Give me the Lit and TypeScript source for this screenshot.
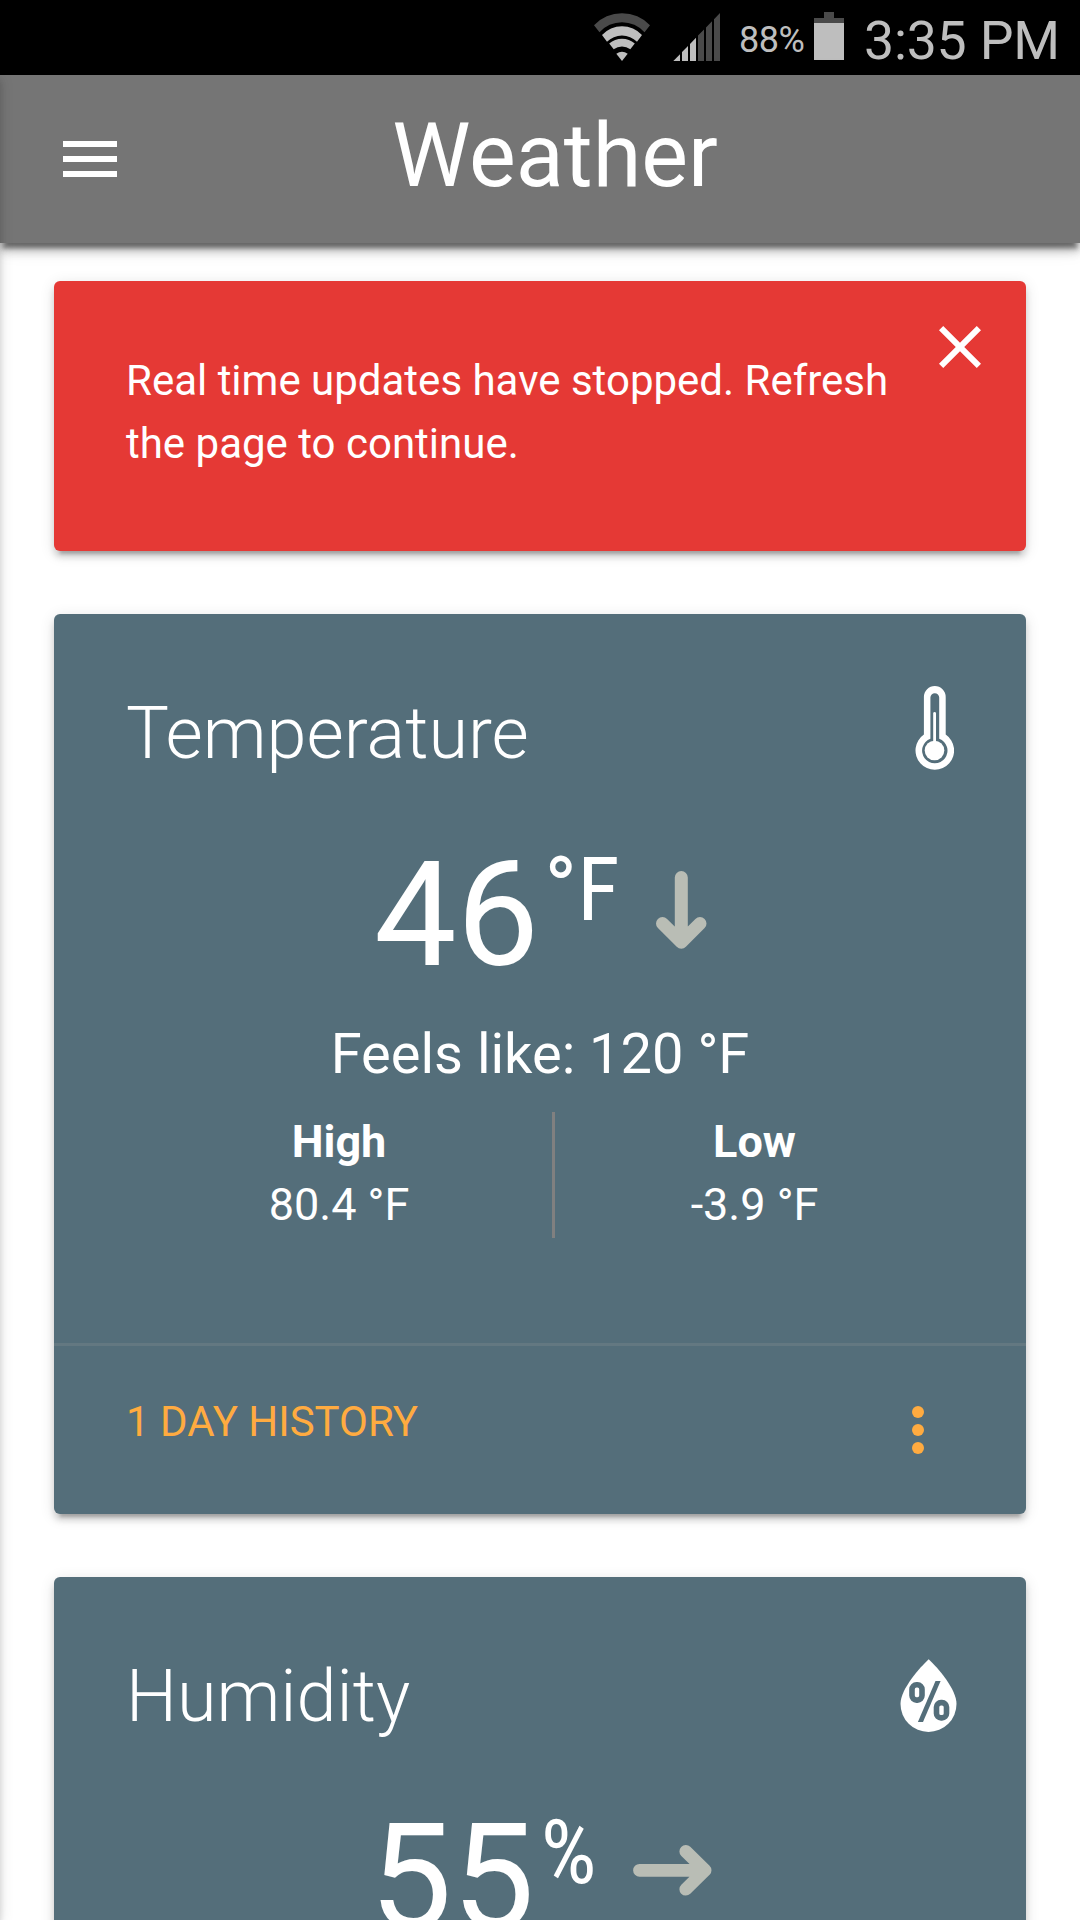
import { LitElement, html, css } from "lit";
import { customElement, property } from "lit/decorators.js";

type Trend = "down" | "right";

@customElement("status-bar")
class StatusBar extends LitElement {
  static styles = css`
    :host {
      display: flex;
      justify-content: flex-end;
      align-items: flex-start;
      height: 75px;
      background: #000;
      color: #bebebe;
      box-sizing: border-box;
      padding-right: 22px;
    }
    .icons { flex: none; width: 145px; height: 75px; }
    .level { font-size: 36px; line-height: 42px; letter-spacing: -0.5px; padding-top: 19px; width: 75px; }
    .battery { flex: none; width: 30px; height: 75px; }
    .clock { font-size: 53.6px; line-height: 64px; font-weight: 400; letter-spacing: -0.2px; padding: 8.5px 0 0 20px; box-sizing: border-box; width: 214px; white-space: nowrap; }
  `;
  render() {
    return html`
      <svg class="icons" viewBox="594 0 145 75">
        <path fill="#4a4a4a" d="M594 25.3A38.5 38.5 0 0 1 650 25.3L644.5 32.3A30 30 0 0 0 599.5 32.3Z" />
        <path fill="#bebebe" d="M602 35A27 27 0 0 1 642 35L637 41.8A21 21 0 0 0 607 41.8Z" />
        <path fill="#bebebe" d="M609.2 43.5A19.5 19.5 0 0 1 634.8 43.5L630.3 49.3A14 14 0 0 0 613.7 49.3Z" />
        <path fill="#bebebe" d="M616.3 53.8A9.5 9.5 0 0 1 627.7 53.8L622 61Z" />
        <path fill="#bebebe" d="M673.3 61L680 54.2V61ZM682 61V52.1L688 46V61ZM690 61V43.9L696 37.7V61Z" />
        <path fill="#4a4a4a" d="M698 61V35.6L704 29.4V61ZM706 61V27.4L712 21.2V61ZM714 61V19.2L720 13V61Z" />
      </svg>
      <span class="level">88%</span>
      <svg class="battery" viewBox="0 0 30 75">
        <path fill="#4a4a4a" d="M10 12H20V18H30V23H0V18H10Z" />
        <rect y="23" width="30" height="37" fill="#bebebe" />
      </svg>
      <span class="clock">3:35 PM</span>
    `;
  }
}

@customElement("weather-card")
class WeatherCard extends LitElement {
  @property() heading = "";
  @property() value = "";
  @property() unit = "";
  @property() trend: Trend = "right";
  @property() icon = "";
  @property() feels = "";
  @property() high = "";
  @property() low = "";
  @property() history = "";

  static styles = css`
    :host {
      display: flex;
      flex-direction: column;
      box-sizing: border-box;
      flex: none;
      height: 900px;
      border-radius: 6px;
      background: #546e7a;
      color: #fff;
      box-shadow: 0 6px 6px 0 rgba(0, 0, 0, 0.14), 0 3px 15px 0 rgba(0, 0, 0, 0.12), 0 9px 3px -6px rgba(0, 0, 0, 0.2);
    }
    .content { flex: 1; padding: 71px 72px 0; }
    .head { display: flex; justify-content: space-between; height: 97px; }
    .heading { font-size: 72px; line-height: 97px; font-weight: 300; }
    .thermometer { width: 40px; height: 84px; margin-top: 0.5px; display: block; }
    .drop { width: 57px; height: 74px; margin: 11px -2.5px 0 0; display: block; }
    .reading { display: flex; align-items: flex-start; height: 147px; margin-top: 60px; }
    .reading-down { padding-left: 248px; }
    .reading-right { padding-left: 243.5px; }
    .value { font-size: 147px; line-height: 147px; }
    .unit { font-size: 88.2px; line-height: 88px; margin-top: 4px; font-stretch: 75%; font-family: "Roboto Condensed", Roboto, "Liberation Sans", sans-serif; }
    .reading-down .unit { width: 111.5px; margin-left: 5px; }
    .reading-right .unit { width: 92px; margin-left: 6px; }
    .down { width: 51px; height: 78px; margin-top: 29px; }
    .right { width: 79px; height: 51px; margin-top: 40px; }
    .feels { font-size: 56px; line-height: 84px; margin-top: 23px; text-align: center; }
    .range { display: flex; height: 126px; margin-top: 16px; font-size: 45px; line-height: 63px; text-align: center; }
    .range-item { flex: 1; margin-top: -2px; }
    .range-item:first-child { flex: none; width: 426px; }
    .divider { width: 3px; background: #808080; }
    .label { font-weight: 700; }
    .action {
      display: flex;
      justify-content: space-between;
      height: 168px;
      border-top: 3px solid rgba(160, 160, 160, 0.2);
      padding: 0 72px;
      color: #ffab40;
    }
    .history { font-size: 42px; line-height: 63px; padding-top: 44px; }
    .more { width: 72px; height: 72px; margin-top: 48px; }
  `;

  private renderIcon() {
    if (this.icon === "thermometer") {
      return html`<svg class="thermometer" viewBox="914.3 685 40 84">
        <path fill="#fff" fill-rule="evenodd"
          d="M924.2 733.5V696A10.9 10.9 0 0 1 946 696V733.5A19.3 19.3 0 1 1 924.2 733.5ZM930.7 737.7V696.6A4.4 4.4 0 0 1 939.5 696.6V737.7A12.7 12.7 0 1 1 930.7 737.7Z" />
        <path stroke="#fff" stroke-width="2.8" stroke-linecap="round" d="M934.9 712.4V742" />
        <circle cx="934.8" cy="749.5" r="9.8" fill="#fff" />
      </svg>`;
    }
    return html`<svg class="drop" viewBox="899.5 1659 57 74">
      <path fill="#fff" d="M928.2 1659.3C937 1667.5 956 1689 956 1704A27.9 27.9 0 0 1 900 1704C900 1689 919.4 1667.5 928.2 1659.3Z" />
      <g fill="none" stroke="#546e7a">
        <rect x="911.5" y="1684.8" width="10" height="15.3" rx="4.5" stroke-width="5.6" />
        <rect x="936" y="1702.6" width="10" height="15.3" rx="4.5" stroke-width="5.6" />
      </g>
      <path fill="#546e7a" d="M935 1681H940.1L922.5 1722H917.4Z" />
    </svg>`;
  }

  private renderTrend() {
    const stroke = "#b9bdb5";
    return this.trend === "down"
      ? html`<svg class="down" viewBox="656 871 51 78" fill="none" stroke=${stroke} stroke-width="13" stroke-linecap="round" stroke-linejoin="round">
          <path d="M681.3 877.5V942M662.5 923.5L681.3 942.2L700 923.5" />
        </svg>`
      : html`<svg class="right" viewBox="632.5 1845 79 51" fill="none" stroke=${stroke} stroke-width="12.8" stroke-linecap="round" stroke-linejoin="round">
          <path d="M639 1870.3H704M685.3 1851.4L704.6 1870.3L685.3 1889.2" />
        </svg>`;
  }

  render() {
    return html`
      <div class="content">
        <div class="head"><span class="heading">${this.heading}</span>${this.renderIcon()}</div>
        <div class="reading reading-${this.trend}">
          <span class="value">${this.value}</span><span class="unit">${this.unit}</span>${this.renderTrend()}
        </div>
        ${this.feels
          ? html`<div class="feels">Feels like: ${this.feels}</div>
              <div class="range">
                <div class="range-item"><div class="label">High</div><div>${this.high}</div></div>
                <div class="divider"></div>
                <div class="range-item"><div class="label">Low</div><div>${this.low}</div></div>
              </div>`
          : ""}
      </div>
      ${this.history
        ? html`<div class="action">
            <span class="history">${this.history}</span>
            <svg class="more" viewBox="0 0 24 24" fill="currentColor">
              <circle cx="12" cy="6" r="2" /><circle cx="12" cy="12" r="2" /><circle cx="12" cy="18" r="2" />
            </svg>
          </div>`
        : ""}
    `;
  }
}

@customElement("app-root")
class AppRoot extends LitElement {
  static styles = css`
    :host {
      display: flex;
      flex-direction: column;
      position: relative;
      width: 1080px;
      height: 1920px;
      overflow: hidden;
      background: #fff;
      font-family: Roboto, "Liberation Sans", sans-serif;
    }
    .status { flex: none; }
    .nav {
      flex: none;
      display: flex;
      align-items: center;
      box-sizing: border-box;
      height: 168px;
      padding: 0 96px 0 54px;
      background: #757575;
      color: #fff;
      box-shadow:
        0 6px 6px 0 rgba(0, 0, 0, 0.14), 0 3px 15px 0 rgba(0, 0, 0, 0.12), 0 9px 3px -6px rgba(0, 0, 0, 0.2),
        0 9px 9px 0 rgba(0, 0, 0, 0.14), 0 3px 21px 0 rgba(0, 0, 0, 0.12), 0 9px 3px -3px rgba(0, 0, 0, 0.2);
    }
    .menu { width: 72px; height: 72px; flex: none; }
    .title { flex: 1; text-align: center; font-size: 88.2px; line-height: 163px; height: 168px; }
    .page { flex: 1; min-height: 0; display: flex; flex-direction: column; gap: 63px; padding: 38px 54px 0; }
    .alert {
      flex: none;
      display: flex;
      justify-content: space-between;
      box-sizing: border-box;
      height: 270px;
      padding: 30px 30px 0 72px;
      border-radius: 6px;
      background: #e53935;
      color: #fff;
      box-shadow: 0 6px 6px 0 rgba(0, 0, 0, 0.14), 0 3px 15px 0 rgba(0, 0, 0, 0.12), 0 9px 3px -6px rgba(0, 0, 0, 0.2);
    }
    .message { margin: 38px 0 0; width: 780px; font-size: 42px; line-height: 63px; }
    .close { width: 72px; height: 72px; flex: none; }
    .drawer-edge {
      position: absolute;
      left: -20px;
      top: 75px;
      width: 20px;
      bottom: 0;
      box-shadow: 0 6px 6px 0 rgba(0, 0, 0, 0.14), 0 3px 15px 0 rgba(0, 0, 0, 0.12);
      clip-path: inset(0 -30px 0 0);
    }
  `;
  render() {
    return html`
      <status-bar class="status"></status-bar>
      <header class="nav">
        <svg class="menu" viewBox="0 0 24 24" fill="#fff"><path d="M3 18h18v-2H3v2zm0-5h18v-2H3v2zm0-7v2h18V6H3z" /></svg>
        <span class="title">Weather</span>
      </header>
      <main class="page">
        <section class="alert">
          <p class="message">Real time updates have stopped. Refresh the page to continue.</p>
          <svg class="close" viewBox="0 0 24 24" fill="#fff"><path d="M19 6.41L17.59 5 12 10.59 6.41 5 5 6.41 10.59 12 5 17.59 6.41 19 12 13.41 17.59 19 19 17.59 13.41 12z" /></svg>
        </section>
        <weather-card heading="Temperature" value="46" unit="°F" trend="down" icon="thermometer"
          feels="120 °F" high="80.4 °F" low="-3.9 °F" history="1 DAY HISTORY"></weather-card>
        <weather-card heading="Humidity" value="55" unit="%" trend="right" icon="drop"></weather-card>
      </main>
      <div class="drawer-edge"></div>
    `;
  }
}
